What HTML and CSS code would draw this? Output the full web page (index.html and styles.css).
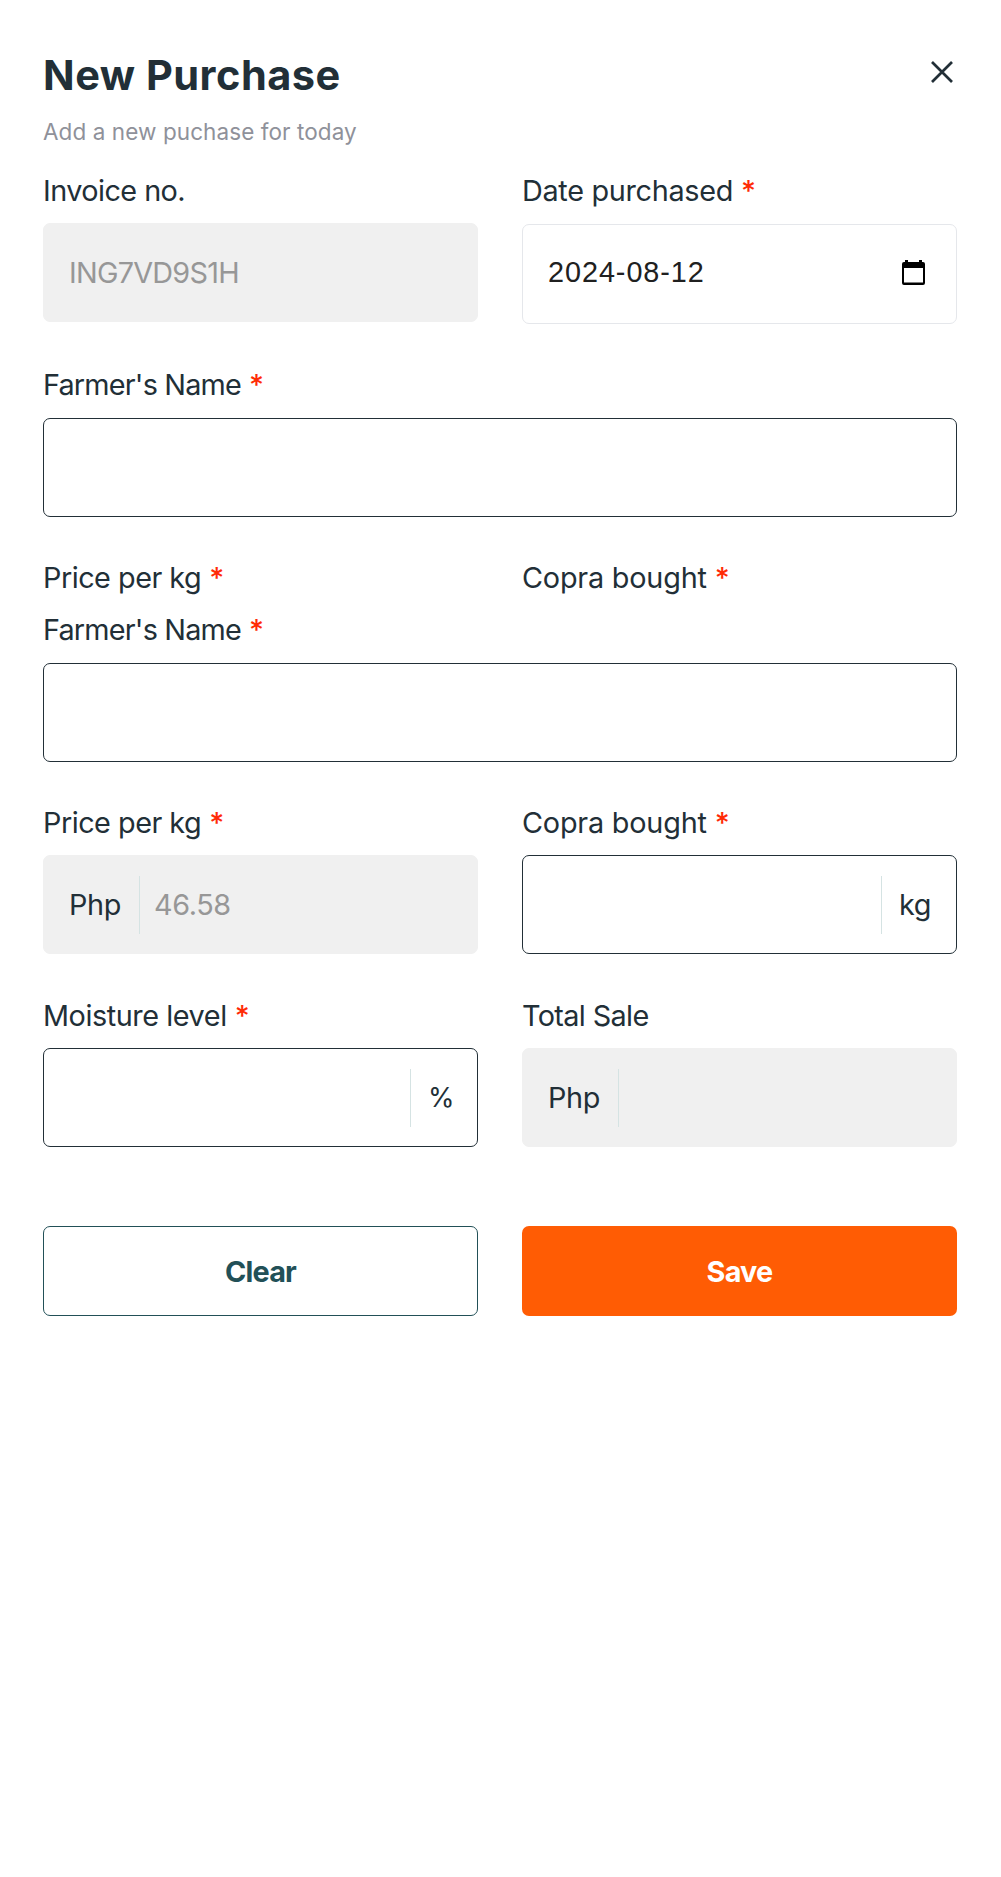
FILE: index.html
```html
<!DOCTYPE html>
<html lang="en">
<head>
<meta charset="utf-8">
<title>New Purchase</title>
<link rel="stylesheet" href="styles.css">
</head>
<body>
<main class="panel">
  <header class="head">
    <div>
      <h1 class="title">New Purchase</h1>
      <p class="subtitle">Add a new puchase for today</p>
    </div>
    <button class="close" type="button" aria-label="Close">
      <svg width="24" height="24" viewBox="0 0 24 24"><path d="M2 2l20 20M22 2L2 22" fill="none" stroke="#222f37" stroke-width="2.7"/></svg>
    </button>
  </header>
  <form class="form">
    <div class="row">
      <div class="field">
        <label class="label label-low"><span class="t-invoice">Invoice no.</span></label>
        <div class="box box-disabled"><span class="value t-code">ING7VD9S1H</span></div>
      </div>
      <div class="field">
        <label class="label label-low"><span class="t-date">Date purchased</span><span class="req">*</span></label>
        <div class="box box-date"><span class="date">2024-08-12</span>
          <svg class="calendar" width="23" height="25" viewBox="0 0 23 25"><path fill-rule="evenodd" d="M3 0h3v2h11V0h3v2h1q2 0 2 2v19q0 2-2 2H2q-2 0-2-2V4q0-2 2-2h1zM2 8v14.500h19V8z"/></svg>
        </div>
      </div>
    </div>
    <div class="field">
      <label class="label"><span class="t-farmer">Farmer's Name</span><span class="req">*</span></label>
      <div class="box"></div>
    </div>
    <div class="row">
      <label class="label"><span class="t-price">Price per kg</span><span class="req">*</span></label>
      <label class="label"><span class="t-copra">Copra bought</span><span class="req">*</span></label>
    </div>
    <div class="field field-tight">
      <label class="label"><span class="t-farmer">Farmer's Name</span><span class="req">*</span></label>
      <div class="box"></div>
    </div>
    <div class="row">
      <div class="field">
        <label class="label label-low"><span class="t-price">Price per kg</span><span class="req">*</span></label>
        <div class="box box-disabled"><span class="prefix">Php</span><span class="value t-num">46.58</span></div>
      </div>
      <div class="field">
        <label class="label label-low"><span class="t-copra">Copra bought</span><span class="req">*</span></label>
        <div class="box"><span class="suffix suffix-kg">kg</span></div>
      </div>
    </div>
    <div class="row">
      <div class="field">
        <label class="label label-low"><span class="t-moist">Moisture level</span><span class="req">*</span></label>
        <div class="box"><span class="suffix suffix-pct">%</span></div>
      </div>
      <div class="field">
        <label class="label label-low"><span class="t-total">Total Sale</span></label>
        <div class="box box-disabled"><span class="prefix">Php</span></div>
      </div>
    </div>
    <div class="actions">
      <button class="btn btn-clear" type="button">Clear</button>
      <button class="btn btn-save" type="button">Save</button>
    </div>
  </form>
</main>
</body>
</html>
```
FILE: styles.css
```css
* { box-sizing: border-box; }
body {
  margin: 0;
  background: #fff;
  color: #222f37;
  font-family: Inter, "Liberation Sans", sans-serif;
  font-size: 28.800px;
}
.panel { padding: 50px 44px 0 43px; }
.head { display: flex; justify-content: space-between; align-items: flex-start; height: 121px; }
.title { margin: 0; font-size: 41.500px; line-height: 50px; font-weight: 700; letter-spacing: 0.5px; }
.subtitle { margin: 14px 0 0; font-size: 22.500px; line-height: 36px; color: #8f919a; letter-spacing: 0.08px; }
.close { margin: 10px 3px 0 0; padding: 0; border: 0; background: none; line-height: 0; }
.form { display: flex; flex-direction: column; }
.row { display: grid; grid-template-columns: 435px 435px; column-gap: 44px; }
.field { margin-bottom: 42px; }
.field-tight { margin-bottom: 41px; }
.label { display: flex; height: 52px; line-height: 38px; white-space: nowrap; }
.label-low { padding-top: 1px; }
.req { margin-left: 8px; color: #ff2b06; font-weight: 500; }
.t-invoice { letter-spacing: -0.55px; }
.t-code { letter-spacing: -0.75px; }
.t-date { letter-spacing: -0.3px; }
.t-farmer { letter-spacing: -0.8px; }
.t-price { letter-spacing: -0.5px; }
.t-copra { letter-spacing: -0.2px; }
.t-moist { letter-spacing: -0.43px; }
.t-total { letter-spacing: -0.62px; }
.t-num { letter-spacing: -0.4px; }
.box {
  display: flex;
  align-items: center;
  height: 99px;
  border: 1px solid #222f37;
  border-radius: 7px;
  padding: 0 25px;
}
.box-disabled { background: #f0f0f0; border-color: #f0f0f0; }
.box-date { margin-top: 1px; height: 100px; border-color: #e5e7eb; justify-content: space-between; padding: 0 31px 3px 25px; }
.date { font-family: "Liberation Sans", Arial, sans-serif; color: #202020; letter-spacing: 0.95px; }
.value { color: #979797; }
.prefix, .suffix { display: flex; align-items: center; height: 58px; padding-bottom: 1px; }
.prefix { width: 71px; border-right: 1px solid #d5e3e3; margin-right: 14px; letter-spacing: -0.3px; }
.suffix { margin-left: auto; border-left: 1px solid #d5e3e3; letter-spacing: -0.5px; }
.suffix-kg { width: 50px; padding-left: 17px; }
.suffix-pct { width: 42px; padding-left: 17px; font-size: 27px; }
.actions { display: grid; grid-template-columns: 435px 435px; column-gap: 44px; margin-top: 37px; }
.btn { height: 90px; border-radius: 7px; font: 700 28.800px Inter, "Liberation Sans", sans-serif; letter-spacing: -0.8px; }
.btn-clear { background: #fff; border: 1px solid #225057; color: #225057; }
.btn-save { background: #ff5c04; border: 0; color: #fff; }
```
